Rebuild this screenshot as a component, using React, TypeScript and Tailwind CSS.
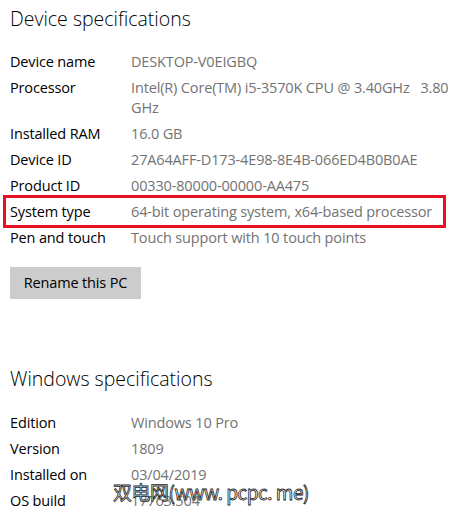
const font = { fontFamily: '"Open Sans", "Noto Sans", sans-serif' }

function Row({ label, children, boxed }: { label: string; children: React.ReactNode; boxed?: boolean }) {
  return (
    <div className="relative flex py-[3px] text-[14.5px] leading-[20px] tracking-[-0.15px]">
      {boxed && (
        <div className="absolute -left-[7px] -top-[4px] h-[33px] w-[443px] border-[3px] border-[#e81123]" />
      )}
      <div className="w-[121px] shrink-0 text-black">{label}</div>
      <div className="text-[#737373] whitespace-pre">{children}</div>
    </div>
  )
}

export default function App() {
  return (
    <div className="relative h-[517px] w-[469px] overflow-hidden bg-white px-[10px] pt-[5px]" style={font}>
      <h2 className="text-[19.5px] leading-[28px] font-light text-black">Device specifications</h2>

      <div className="mt-[16px] flex flex-col">
        <Row label="Device name">DESKTOP-V0EIGBQ</Row>
        <Row label="Processor">
          {"Intel(R) Core(TM) i5-3570K CPU @ 3.40GHz   3.80"}
          <br />
          GHz
        </Row>
        <Row label="Installed RAM">16.0 GB</Row>
        <Row label="Device ID">27A64AFF-D173-4E98-8E4B-066ED4B0B0AE</Row>
        <Row label="Product ID">00330-80000-00000-AA475</Row>
        <Row label="System type" boxed>
          64-bit operating system, x64-based processor
        </Row>
        <Row label="Pen and touch">Touch support with 10 touch points</Row>
      </div>

      <button className="mt-[16px] h-[32px] w-[131px] bg-[#cccccc] text-[14.5px] tracking-[-0.15px] text-black">
        Rename this PC
      </button>

      <h2 className="mt-[66px] text-[19.5px] leading-[28px] font-light text-black">Windows specifications</h2>

      <div className="mt-[17px] flex flex-col">
        <Row label="Edition">Windows 10 Pro</Row>
        <Row label="Version">1809</Row>
        <Row label="Installed on">03/04/2019</Row>
        <Row label="OS build">17763.504</Row>
      </div>

      {/* watermark */}
      <div
        className="absolute left-[113px] top-[479px] text-[19px] leading-[26px] tracking-[-0.5px] text-white"
        style={{
          fontFamily: '"Noto Sans CJK SC", "Liberation Sans", sans-serif',
          WebkitTextStroke: '0.8px #222',
        }}
      >
        双电网(www. pcpc. me)
      </div>
    </div>
  )
}
